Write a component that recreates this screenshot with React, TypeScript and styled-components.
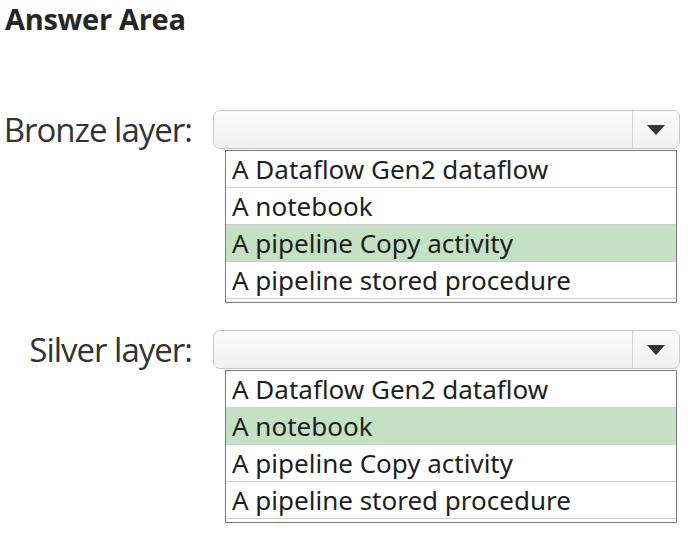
import React from "react";
import styled, { createGlobalStyle } from "styled-components";

const GlobalStyle = createGlobalStyle`
  html, body {
    margin: 0;
    padding: 0;
    background: #ffffff;
  }
  body {
    font-family: "Open Sans", "Noto Sans", "Liberation Sans", sans-serif;
    color: #222;
  }
`;

const Page = styled.div`
  width: 700px;
  height: 549px;
  padding: 0 0 0 5px;
  box-sizing: border-box;
  display: flex;
  flex-direction: column;
`;

const Title = styled.h1`
  margin: 0;
  font-size: 29px;
  font-weight: 700;
  color: #262626;
  letter-spacing: -0.3px;
  line-height: 38px;
`;

const Sections = styled.div`
  display: flex;
  flex-direction: column;
  gap: 27px;
  margin-top: 72px;
`;

const Row = styled.div`
  display: grid;
  grid-template-columns: 187px 467px;
  column-gap: 21px;
  align-items: start;
`;

const Label = styled.div`
  height: 39px;
  display: flex;
  align-items: center;
  justify-content: flex-end;
  font-size: 33px;
  letter-spacing: -1px;
  color: #333;
  white-space: nowrap;
`;

const Field = styled.div`
  display: flex;
  flex-direction: column;
`;

const SelectBox = styled.div`
  height: 39px;
  box-sizing: border-box;
  border: 1px solid #c9c9c9;
  border-radius: 7px;
  background: linear-gradient(#fbfbfb, #f1f1f1);
  display: flex;
  justify-content: flex-end;
`;

const ArrowButton = styled.div`
  width: 46px;
  border-left: 1px solid #d2d2d2;
  display: flex;
  align-items: center;
  justify-content: center;
`;

const OptionList = styled.ul`
  list-style: none;
  margin: 1px 0 0 12px;
  padding: 0 0 3px;
  width: 452px;
  box-sizing: border-box;
  border: 1px solid #7a7a7a;
  background: #fff;
`;

const Option = styled.li<{ $selected?: boolean }>`
  height: 37px;
  box-sizing: border-box;
  padding: 0 0 1px 6px;
  display: flex;
  align-items: center;
  font-family: "Noto Sans", "Open Sans", sans-serif;
  font-size: 26px;
  color: #1e1e1e;
  background: ${(p) => (p.$selected ? "#c4e1c4" : "#fff")};
  border-bottom: 1px solid #cfcfcf;
  white-space: nowrap;
`;

const options = [
  "A Dataflow Gen2 dataflow",
  "A notebook",
  "A pipeline Copy activity",
  "A pipeline stored procedure",
];

const layers = [
  { label: "Bronze layer:", selected: 2 },
  { label: "Silver layer:", selected: 1 },
];

const Caret = () => (
  <svg width="18" height="10" viewBox="0 0 18 10">
    <path d="M0 0 L18 0 L9 10 Z" fill="#333" />
  </svg>
);

export default function App() {
  return (
    <>
      <GlobalStyle />
      <Page>
        <Title>Answer Area</Title>
        <Sections>
          {layers.map((layer) => (
            <Row key={layer.label}>
              <Label>{layer.label}</Label>
              <Field>
                <SelectBox>
                  <ArrowButton>
                    <Caret />
                  </ArrowButton>
                </SelectBox>
                <OptionList>
                  {options.map((opt, i) => (
                    <Option key={opt} $selected={i === layer.selected}>
                      {opt}
                    </Option>
                  ))}
                </OptionList>
              </Field>
            </Row>
          ))}
        </Sections>
      </Page>
    </>
  );
}
